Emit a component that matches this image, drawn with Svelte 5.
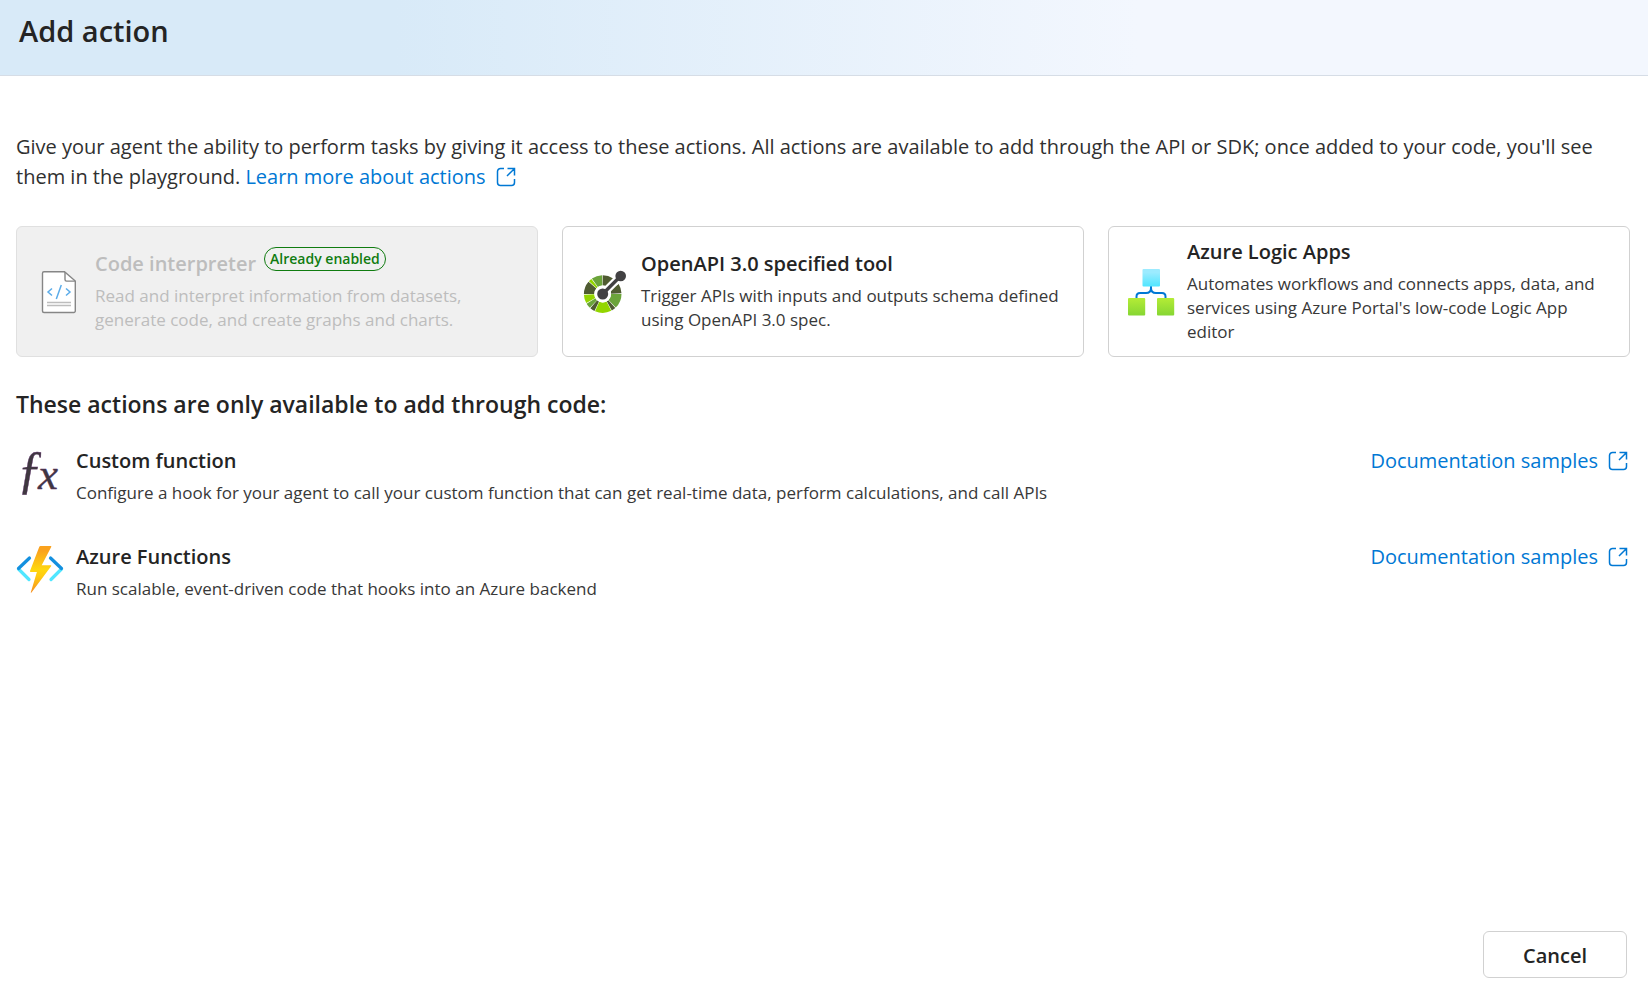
<script>
  const cards = [
    {
      icon: 'code',
      title: 'Code interpreter',
      badge: 'Already enabled',
      text: 'Read and interpret information from datasets, generate code, and create graphs and charts.',
      disabled: true
    },
    {
      icon: 'openapi',
      title: 'OpenAPI 3.0 specified tool',
      text: 'Trigger APIs with inputs and outputs schema defined using OpenAPI 3.0 spec.'
    },
    {
      icon: 'logic',
      title: 'Azure Logic Apps',
      text: "Automates workflows and connects apps, data, and services using Azure Portal's low-code Logic App editor"
    }
  ];

  const codeActions = [
    {
      icon: 'fx',
      title: 'Custom function',
      text: 'Configure a hook for your agent to call your custom function that can get real-time data, perform calculations, and call APIs'
    },
    {
      icon: 'functions',
      title: 'Azure Functions',
      text: 'Run scalable, event-driven code that hooks into an Azure backend'
    }
  ];

  // Ring segments of the OpenAPI mark: start angle, end angle (clockwise from the top), colour.
  const segments = [
    [0, 34, '#4f5b31'],
    [58, 88, '#4f5b31'],
    [90, 136, '#6ba43a'],
    [138, 151, '#4f5b31'],
    [153, 204, '#93d500'],
    [206, 221, '#4f5b31'],
    [223, 239, '#6ba43a'],
    [241, 268, '#93d500'],
    [270, 311, '#4f5b31'],
    [313, 323, '#93d500'],
    [325, 358, '#6ba43a']
  ];

  function wedge(from, to) {
    const point = (angle, r) => {
      const a = (angle * Math.PI) / 180;
      return `${(20.7 + r * Math.sin(a)).toFixed(2)} ${(26 - r * Math.cos(a)).toFixed(2)}`;
    };
    return `M${point(from, 8.4)} L${point(from, 18.8)} A18.8 18.8 0 0 1 ${point(to, 18.8)} L${point(to, 8.4)} A8.4 8.4 0 0 0 ${point(from, 8.4)}Z`;
  }
</script>

{#snippet external()}
  <svg class="external" viewBox="0 0 20 20" aria-hidden="true">
    <path d="M8 1.5H4.5a3 3 0 0 0-3 3v11a3 3 0 0 0 3 3h11a3 3 0 0 0 3-3V12M11.5 1.5h7v7M18.3 1.7 11 9" />
  </svg>
{/snippet}

{#snippet icon(name)}
  <svg class="icon" viewBox="0 0 48 48" aria-hidden="true">
    {#if name === 'code'}
      <path d="M8 3.7h20.5L39.3 13v30a1.5 1.5 0 0 1-1.5 1.5H8A1.5 1.5 0 0 1 6.5 43V5.2A1.5 1.5 0 0 1 8 3.7Z" fill="#fff" stroke="#868686" stroke-width="1.4" />
      <path d="M29 4v7.6a1.5 1.5 0 0 0 1.5 1.5H39" fill="none" stroke="#868686" stroke-width="1.4" />
      <path d="m16 20.5-4 3.5 4 3.5M30 20.5l4 3.5-4 3.5M25.3 17l-5 14" fill="none" stroke="#5cace9" stroke-width="1.5" />
      <path d="M11 34.5h24M11 37.5h24" fill="none" stroke="#bdbdbd" stroke-width="1.3" />
    {:else if name === 'openapi'}
      {#each segments as [from, to, colour]}
        <path d={wedge(from, to)} fill={colour} />
      {/each}
      <path d="M20.7 26 38.7 8" stroke="#fff" stroke-width="8" />
      <circle cx="20.7" cy="26" r="8.400" fill="#fff" />
      <path d="M20.7 26 38.7 8" stroke="#424143" stroke-width="3.4" />
      <circle cx="20.7" cy="26" r="5.5" fill="#424143" />
      <circle cx="38.7" cy="8" r="5.3" fill="#424143" />
    {:else if name === 'logic'}
      <defs>
        <linearGradient id="logic-top" x2="0" y2="1"><stop offset=".2" stop-color="#9cebff" /><stop offset="1" stop-color="#50e6ff" /></linearGradient>
        <linearGradient id="logic-leaf" x2="0" y2="1"><stop stop-color="#b4ec36" /><stop offset="1" stop-color="#86d633" /></linearGradient>
      </defs>
      <path d="M23 17v3q0 5-5 5h-6q-3.5 0-3.5 3.5V32M23 17v3q0 5 5 5h6q3.5 0 3.5 3.5V32" fill="none" stroke="#0078d4" stroke-width="2" />
      <rect x="14.5" y="1" width="17.5" height="17.5" rx="1" fill="url(#logic-top)" />
      <rect x="0" y="30" width="17.2" height="17.5" rx="1" fill="url(#logic-leaf)" />
      <rect x="29" y="30" width="17.2" height="17.5" rx="1" fill="url(#logic-leaf)" />
    {:else if name === 'fx'}
      <g class="fx">
        <text x="1" y="38" font-size="52">ƒ</text>
        <text x="22" y="40" font-size="45">x</text>
      </g>
    {:else}
      <defs>
        <linearGradient id="bolt" x2="0" y2="1"><stop offset=".1" stop-color="#faa21d" /><stop offset=".5" stop-color="#ffd70f" /><stop offset=".65" stop-color="#fecb12" /><stop offset="1" stop-color="#f78d1e" /></linearGradient>
      </defs>
      <g fill="none" stroke-width="3.2" stroke-linecap="round">
        <path d="M2.5 24 13 34.5M45.5 24 35 34.5" stroke="#50e6ff" />
        <path d="M13.5 13 2.5 23.5M34.5 13 45.5 23.5" stroke="#1490df" />
      </g>
      <path d="M24.5 1h10.3q.9 0 .4.9l-9.5 18.4h9q1 0 .4.9L15.5 47.5q-1 .9-.6-.4l6-20.1h-6q-1.3 0-.9-1L23.2 2q.4-1 1.3-1Z" fill="url(#bolt)" />
    {/if}
  </svg>
{/snippet}

<div class="dialog">
  <header><h1>Add action</h1></header>

  <main>
    <p class="intro">
      Give your agent the ability to perform tasks by giving it access to these actions. All actions are available to add through the API or SDK; once added to your code, you'll see them in the playground.
      <a href="#learn">Learn more about actions{@render external()}</a>
    </p>

    <div class="cards">
      {#each cards as card}
        <button class="card" type="button" disabled={card.disabled}>
          {@render icon(card.icon)}
          <span class="copy">
            <span class="title">
              {card.title}
              {#if card.badge}<span class="badge">{card.badge}</span>{/if}
            </span>
            <span class="desc">{card.text}</span>
          </span>
        </button>
      {/each}
    </div>

    <h2>These actions are only available to add through code:</h2>

    <ul>
      {#each codeActions as action}
        <li>
          {@render icon(action.icon)}
          <div class="copy grow">
            <h3 class="title">{action.title}</h3>
            <p class="desc">{action.text}</p>
          </div>
          <a href="#samples">Documentation samples{@render external()}</a>
        </li>
      {/each}
    </ul>
  </main>

  <footer><button class="cancel" type="button">Cancel</button></footer>
</div>

<style>
  :global(body) {
    background: #fff;
  }
  .dialog {
    box-sizing: border-box;
    min-height: 100vh;
    display: flex;
    flex-direction: column;
    color: #242424;
    font-family: 'Open Sans', 'Noto Sans', sans-serif;
    font-size: 20px;
    line-height: 30px;
  }
  h1, h2, h3, p, ul {
    margin: 0;
    padding: 0;
  }
  header {
    padding: 11px 19px 24px;
    border-bottom: 1px solid #d6dde6;
    background: linear-gradient(90deg, #d8eaf8 24%, #f3f7fe 69%);
  }
  h1 {
    font-size: 29px;
    line-height: 40px;
    font-weight: 600;
  }
  main {
    flex: 1;
    padding: 56px 18px 0 16px;
  }
  .intro {
    color: #303030;
  }
  a {
    color: #0078d4;
    text-decoration: none;
    white-space: nowrap;
  }
  .external {
    width: 20px;
    height: 20px;
    margin-left: 10px;
    vertical-align: -3px;
    fill: none;
    stroke: currentColor;
    stroke-width: 1.5;
  }
  .cards {
    display: grid;
    grid-template-columns: repeat(3, 1fr);
    gap: 24px;
    margin-top: 34px;
  }
  button {
    font: inherit;
    color: inherit;
    background: #fff;
    border: 1px solid #d1d1d1;
    border-radius: 6px;
  }
  .card {
    display: flex;
    align-items: center;
    gap: 11px;
    padding: 12px 19px;
    text-align: left;
  }
  .card:disabled {
    background: #f0f0f0;
    border-color: #e0e0e0;
    color: #bdbdbd;
  }
  .icon {
    flex: none;
    width: 48px;
    height: 48px;
    overflow: visible;
  }
  .copy {
    display: flex;
    flex-direction: column;
    gap: 7px;
  }
  .grow {
    flex: 1;
  }
  .title {
    display: flex;
    gap: 8px;
    height: 26px;
    font-size: 20px;
    line-height: 26px;
    font-weight: 600;
  }
  .badge {
    box-sizing: border-box;
    height: 24px;
    margin-top: -4px;
    padding: 0 5px;
    border: 1px solid #107c10;
    border-radius: 12px;
    color: #107c10;
    font-size: 14px;
    line-height: 22px;
  }
  .desc {
    font-size: 17px;
    line-height: 24px;
  }
  .card:enabled .desc,
  li .desc {
    color: #383838;
  }
  h2 {
    margin-top: 31px;
    font-size: 23px;
    line-height: 32px;
    font-weight: 600;
  }
  ul {
    list-style: none;
    display: flex;
    flex-direction: column;
    gap: 39px;
    margin-top: 28px;
  }
  li {
    display: flex;
    gap: 12px;
    padding-right: 2px;
  }
  li .icon {
    margin-top: 1px;
  }
  li a {
    line-height: 26px;
  }
  .fx {
    font-family: 'Liberation Serif', serif;
    font-style: italic;
    fill: #3f3840;
    stroke: #5c2e68;
    stroke-width: 0.4;
  }
  footer {
    display: flex;
    justify-content: flex-end;
    padding: 12px 21px 13px;
  }
  .cancel {
    width: 144px;
    height: 47px;
    padding: 3px 0 0;
    font-weight: 600;
  }
</style>
